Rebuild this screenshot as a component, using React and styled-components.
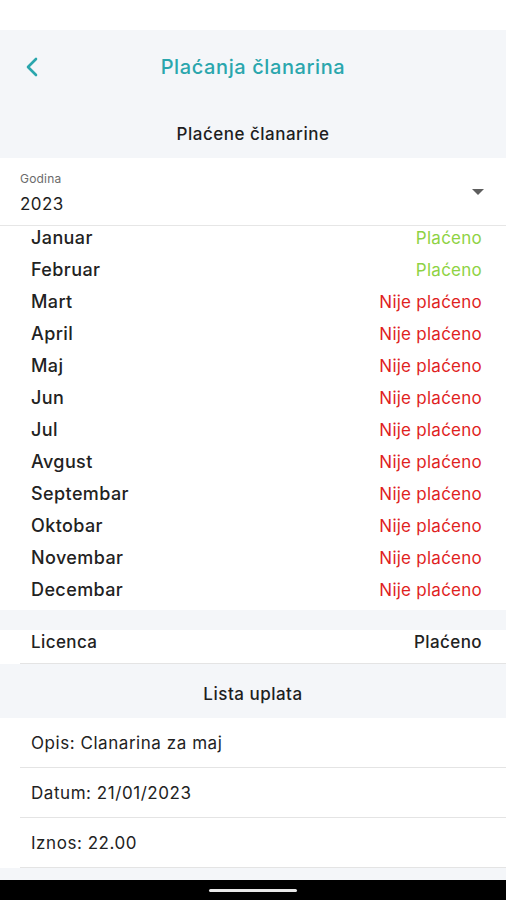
import React from "react";
import styled, { createGlobalStyle } from "styled-components";

const GlobalStyle = createGlobalStyle`
  html, body {
    margin: 0;
    padding: 0;
    background: #ffffff;
    font-family: Inter, "Open Sans", sans-serif;
    -webkit-font-smoothing: antialiased;
  }
`;

// Page shell
const Screen = styled.div`
  width: 506px;
  height: 900px;
  display: flex;
  flex-direction: column;
  background: #f4f6f9;
  overflow: hidden;
`;

const StatusBar = styled.div`
  height: 30px;
  background: #ffffff;
  flex-shrink: 0;
`;

// Top navigation bar
const NavBar = styled.div`
  height: 74px;
  display: flex;
  align-items: center;
  position: relative;
  justify-content: center;
`;

const BackButton = styled.button`
  position: absolute;
  left: 20px;
  top: 25px;
  width: 24px;
  height: 24px;
  padding: 0;
  border: none;
  background: none;
  display: flex;
  align-items: center;
  justify-content: center;
`;

const Title = styled.h1`
  margin: 0;
  font-size: 20px;
  font-weight: 500;
  letter-spacing: 0.6px;
  color: #2aa6ad;
`;

const SectionTitle = styled.div`
  height: 54px;
  box-sizing: border-box;
  padding-top: 6px;
  display: flex;
  align-items: center;
  justify-content: center;
  font-size: 17px;
  font-weight: 500;
  letter-spacing: 0.5px;
  color: #1e1e1e;
  flex-shrink: 0;
`;

// Year dropdown
const Dropdown = styled.div`
  background: #ffffff;
  height: 67px;
  border-bottom: 1px solid #e6e6e6;
  display: flex;
  align-items: center;
  justify-content: space-between;
  padding: 0 22px 0 20px;
  flex-shrink: 0;
`;

const DropdownValue = styled.div`
  display: flex;
  flex-direction: column;
  gap: 8px;
  padding-top: 1px;
`;

const DropdownLabel = styled.span`
  font-size: 12px;
  color: #6b6b6b;
  letter-spacing: 0.2px;
`;

const DropdownText = styled.span`
  font-size: 17px;
  color: #1e1e1e;
  letter-spacing: 0.4px;
`;

const Caret = styled.div`
  width: 0;
  height: 0;
  border-left: 6px solid transparent;
  border-right: 6px solid transparent;
  border-top: 6px solid #5e5e5e;
`;

// Month list
const MonthList = styled.div`
  background: #ffffff;
  padding: 0 24px 0 31px;
  display: flex;
  flex-direction: column;
  flex-shrink: 0;
`;

const Row = styled.div`
  height: 32px;
  display: flex;
  align-items: flex-start;
  justify-content: space-between;
  line-height: 24px;
`;

const MonthName = styled.span`
  font-size: 18px;
  font-weight: 500;
  letter-spacing: 0.4px;
  color: #222222;
`;

const Status = styled.span`
  font-size: 17px;
  letter-spacing: 0.25px;
  color: ${(p) => (p.paid ? "#8ed244" : "#e01f1f")};
`;

const Spacer = styled.div`
  height: 20px;
  flex-shrink: 0;
`;

// Licence row + payments
const Card = styled.div`
  background: #ffffff;
  padding-left: 20px;
  flex-shrink: 0;
`;

const LicenceRow = styled.div`
  height: 33px;
  border-bottom: 1px solid #e4e4e4;
  display: flex;
  align-items: flex-start;
  justify-content: space-between;
  padding: 0 24px 0 11px;
  font-size: 17px;
  line-height: 24px;
  font-weight: 500;
  letter-spacing: 0.4px;
  color: #222222;
`;

const PaymentRow = styled.div`
  height: 49px;
  border-bottom: 1px solid #e4e4e4;
  display: flex;
  align-items: center;
  padding-left: 11px;
  font-size: 17px;
  letter-spacing: 0.55px;
  color: #222222;
`;

const Fill = styled.div`
  flex: 1;
`;

const BottomBar = styled.div`
  height: 20px;
  background: #000000;
  display: flex;
  align-items: center;
  justify-content: center;
  flex-shrink: 0;
`;

const HomePill = styled.div`
  width: 88px;
  height: 3px;
  border-radius: 2px;
  background: #e8e8e8;
`;

const months = [
  ["Januar", true],
  ["Februar", true],
  ["Mart", false],
  ["April", false],
  ["Maj", false],
  ["Jun", false],
  ["Jul", false],
  ["Avgust", false],
  ["Septembar", false],
  ["Oktobar", false],
  ["Novembar", false],
  ["Decembar", false],
];

const payments = ["Opis: Clanarina za maj", "Datum: 21/01/2023", "Iznos: 22.00"];

export default function App() {
  return (
    <>
      <GlobalStyle />
      <Screen>
        <StatusBar />
        <NavBar>
          <BackButton aria-label="Nazad">
            <svg width="14" height="22" viewBox="0 0 14 22">
              <path
                d="M11 3 L3 11 L11 19"
                fill="none"
                stroke="#2aa6ad"
                strokeWidth="2.6"
                strokeLinecap="round"
                strokeLinejoin="round"
              />
            </svg>
          </BackButton>
          <Title>Plaćanja članarina</Title>
        </NavBar>
        <SectionTitle>Plaćene članarine</SectionTitle>
        <Dropdown>
          <DropdownValue>
            <DropdownLabel>Godina</DropdownLabel>
            <DropdownText>2023</DropdownText>
          </DropdownValue>
          <Caret />
        </Dropdown>
        <MonthList>
          {months.map(([name, paid]) => (
            <Row key={name}>
              <MonthName>{name}</MonthName>
              <Status paid={paid}>{paid ? "Plaćeno" : "Nije plaćeno"}</Status>
            </Row>
          ))}
        </MonthList>
        <Spacer />
        <Card>
          <LicenceRow>
            <span>Licenca</span>
            <span>Plaćeno</span>
          </LicenceRow>
        </Card>
        <SectionTitle>Lista uplata</SectionTitle>
        <Card>
          {payments.map((p) => (
            <PaymentRow key={p}>{p}</PaymentRow>
          ))}
        </Card>
        <Fill />
        <BottomBar>
          <HomePill />
        </BottomBar>
      </Screen>
    </>
  );
}
